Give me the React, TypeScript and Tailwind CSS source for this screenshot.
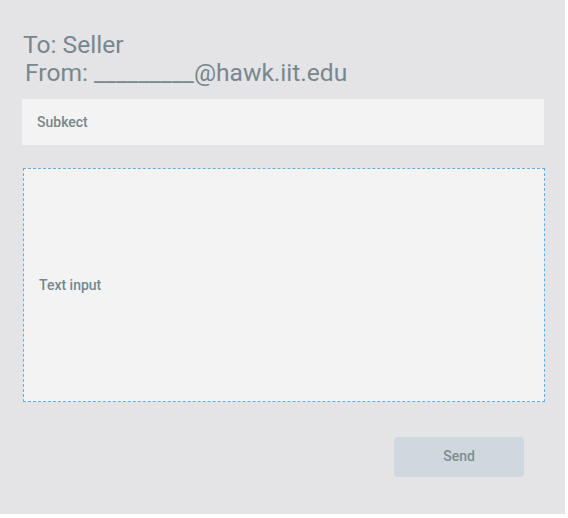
export default function App() {
  return (
    <div className="w-[565px] h-[514px] bg-[#e4e4e6] font-['Roboto',sans-serif] text-[#78878d] pt-[31px] px-[22px]">
      <div className="text-[24.6px] leading-[28px]">
        <div className="pl-[1px]">To: Seller</div>
        <div className="pl-[3px]">From: _________@hawk.iit.edu</div>
      </div>

      <div className="mt-[12px] w-[522px] h-[46px] bg-[#f3f3f3] flex items-center pl-[15px] text-[14px] font-medium">
        Subkect
      </div>

      <div className="mt-[23px] ml-[1px] w-[522px] h-[234px] bg-[#f3f3f3] border border-dashed border-[#59aef5] flex items-center pl-[15px] text-[14px] font-medium">
        Text input
      </div>

      <div className="mt-[35px] flex">
        <button className="ml-[372px] w-[130px] h-[40px] bg-[#cfd8de] rounded-[4px] text-[14px] font-medium text-[#7d8c92] pb-[1px]">
          Send
        </button>
      </div>
    </div>
  );
}
